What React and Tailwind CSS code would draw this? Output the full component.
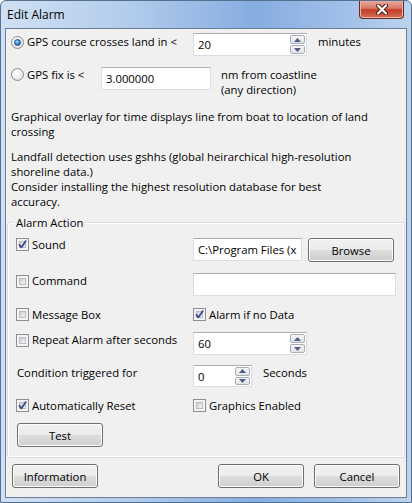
import React from "react";

function Radio({ checked }) {
  return (
    <span className="w-[13px] h-[13px] shrink-0 rounded-full border border-[#8a8a8a] bg-[radial-gradient(circle_at_40%_35%,#ffffff_0%,#f2f2f2_45%,#cfd1d4_100%)] flex items-center justify-center">
      {checked && (
        <span className="w-[7px] h-[7px] rounded-full border border-[#1f4e86] bg-[radial-gradient(circle_at_40%_35%,#b8e4ff_0%,#3d8fd6_45%,#14569f_100%)]" />
      )}
    </span>
  );
}

function Checkbox({ checked }) {
  return (
    <span className="relative w-[13px] h-[13px] shrink-0 border border-[#8e8f8f] bg-[#f4f4f4] p-[2px]">
      <span className="block w-full h-full border border-[#b9bdc3] bg-[linear-gradient(135deg,#c9ccd1_0%,#e4e6e9_60%,#f6f6f6_100%)]" />
      {checked && (
        <svg className="absolute left-0 top-0" width="11" height="11" viewBox="0 0 11 11">
          <path d="M2 5.3 L4.4 8.4 L9.1 1.6" fill="none" stroke="#3b4d8f" strokeWidth="1.8" strokeLinejoin="round" />
        </svg>
      )}
    </span>
  );
}

function TextBox({ value, className }) {
  return (
    <div className={"border border-[#d9dde4] border-t-[#abadb3] bg-white flex items-center pl-[4px] overflow-hidden whitespace-nowrap " + className}>
      {value}
    </div>
  );
}

function Arrow({ up }) {
  return (
    <svg width="7" height="4" viewBox="0 0 7 4">
      <path d={up ? "M0 4 L3.5 0 L7 4 Z" : "M0 0 L3.5 4 L7 0 Z"} fill="#4c5f86" />
    </svg>
  );
}

function Spin({ value, className }) {
  return (
    <div className={"border border-[#d9dde4] border-t-[#abadb3] bg-white flex " + className}>
      <div className="flex-1 flex items-center pl-[4px]">{value}</div>
      <div className="flex flex-col gap-[1px] py-[1px] pr-[1px] w-[16px]">
        <div className="flex-1 rounded-[2px] border border-[#a9aeb6] bg-[linear-gradient(#f6f6f6,#e2e3e6)] flex items-center justify-center">
          <Arrow up />
        </div>
        <div className="flex-1 rounded-[2px] border border-[#a9aeb6] bg-[linear-gradient(#f6f6f6,#e2e3e6)] flex items-center justify-center">
          <Arrow />
        </div>
      </div>
    </div>
  );
}

function Btn({ children, className }) {
  return (
    <div className={"h-[24px] w-[86px] shrink-0 rounded-[3px] border border-[#707070] bg-[linear-gradient(#f2f2f2_0%,#ebebeb_50%,#dddddd_50%,#cfcfcf_100%)] shadow-[inset_0_0_0_1px_#fbfbfb] flex items-center justify-center " + className}>
      {children}
    </div>
  );
}

export default function App() {
  return (
    <div className="w-[412px] h-[503px] overflow-hidden rounded-t-[6px] border border-[#56708f] bg-[linear-gradient(90deg,#cfe0f3_0%,#b4cdec_30%,#86ade0_62%,#a2c1e8_85%,#bcd3ee_100%)] px-[4px] font-['Open_Sans',sans-serif] text-[11.3px] leading-[15px] text-black">
      {/* title bar */}
      <div className="relative h-[27px] flex items-center pl-[2px] text-[12px]">
        <span>Edit Alarm</span>
        <div className="absolute top-[-1px] right-[3px] w-[45px] h-[19px] rounded-b-[4px] border border-[#6b2a20] border-t-0 bg-[linear-gradient(#e8b0a5_0%,#d87866_45%,#c33d27_55%,#d4705a_100%)] shadow-[inset_0_0_0_1px_#eab6ab] flex items-center justify-center">
          <svg width="14" height="11" viewBox="0 0 14 11">
            <path d="M3 1.5 L11 9.5 M11 1.5 L3 9.5" stroke="#4a1a12" strokeWidth="4" strokeLinecap="round" />
            <path d="M3 1.5 L11 9.5 M11 1.5 L3 9.5" stroke="#ffffff" strokeWidth="2.2" strokeLinecap="round" />
          </svg>
        </div>
      </div>

      {/* client area */}
      <div className="h-[470px] border border-[#6c7e96] bg-[#f0f0f0] flex flex-col">
        {/* row 1 */}
        <div className="mt-[4px] h-[23px] flex items-start pl-[5px]">
          <span className="mt-[3px]"><Radio checked /></span>
          <span className="ml-[3px] w-[166px] mt-[1px] whitespace-nowrap">GPS course crosses land in &lt;</span>
          <Spin value="20" className="w-[114px] h-[23px]" />
          <span className="ml-[11px] mt-[1px]">minutes</span>
        </div>

        {/* row 2 */}
        <div className="mt-[11px] h-[31px] flex items-start pl-[5px]">
          <span className="mt-[1px]"><Radio /></span>
          <span className="ml-[3px] w-[74px] whitespace-nowrap">GPS fix is &lt;</span>
          <TextBox value="3.000000" className="w-[110px] h-[23px]" />
          <span className="ml-[10px] whitespace-nowrap">
            nm from coastline
            <br />
            (any direction)
          </span>
        </div>

        <p className="mt-[11px] pl-[5px] whitespace-nowrap">
          Graphical overlay for time displays line from boat to location of land
          <br />
          crossing
        </p>

        <p className="mt-[10px] pl-[5px] whitespace-nowrap">
          Landfall detection uses gshhs (global heirarchical high-resolution
          <br />
          shoreline data.)
          <br />
          Consider installing the highest resolution database for best
          <br />
          accuracy.
        </p>

        {/* Alarm Action group */}
        <div className="relative mt-[13px] mx-[1px] h-[236px] shrink-0 rounded-[3px] border border-[#d5dfe5] shadow-[inset_0_0_0_1px_#ffffff] flex flex-col">
          <span className="absolute top-[-8px] left-[6px] px-[2px] bg-[#f0f0f0]">Alarm Action</span>

          <div className="mt-[15px] h-[24px] flex items-start pl-[8px]">
            <Checkbox checked />
            <span className="ml-[3px] w-[161px] mt-[-1px]">Sound</span>
            <TextBox value="C:\Program Files (x" className="w-[109px] h-[23px]" />
            <Btn className="ml-[6px]">Browse</Btn>
          </div>

          <div className="mt-[11px] h-[23px] flex items-start pl-[8px]">
            <span className="mt-[2px] flex"><Checkbox /></span>
            <span className="ml-[3px] w-[161px]">Command</span>
            <TextBox value="" className="w-[203px] h-[23px]" />
          </div>

          <div className="mt-[12px] h-[13px] flex items-start pl-[8px]">
            <Checkbox />
            <span className="ml-[3px] w-[161px] mt-[-1px]">Message Box</span>
            <Checkbox checked />
            <span className="ml-[3px] mt-[-1px]">Alarm if no Data</span>
          </div>

          <div className="mt-[11px] h-[23px] flex items-start pl-[8px]">
            <span className="mt-[2px] flex"><Checkbox /></span>
            <span className="ml-[3px] w-[161px] whitespace-nowrap">Repeat Alarm after seconds</span>
            <Spin value="60" className="w-[114px] h-[23px]" />
          </div>

          <div className="mt-[10px] h-[22px] flex items-start pl-[9px]">
            <span className="w-[176px] whitespace-nowrap">Condition triggered for</span>
            <Spin value="0" className="w-[59px] h-[22px]" />
            <span className="ml-[11px]">Seconds</span>
          </div>

          <div className="mt-[12px] h-[13px] flex items-start pl-[8px]">
            <Checkbox checked />
            <span className="ml-[3px] w-[161px] mt-[-1px]">Automatically Reset</span>
            <Checkbox />
            <span className="ml-[3px] mt-[-1px]">Graphics Enabled</span>
          </div>

          <div className="mt-[11px] flex pl-[9px]">
            <Btn>Test</Btn>
          </div>
        </div>

        {/* bottom buttons */}
        <div className="mt-[6px] flex pl-[6px] pr-[6px]">
          <Btn>Information</Btn>
          <Btn className="ml-auto">OK</Btn>
          <Btn className="ml-[10px]">Cancel</Btn>
        </div>
      </div>
    </div>
  );
}
